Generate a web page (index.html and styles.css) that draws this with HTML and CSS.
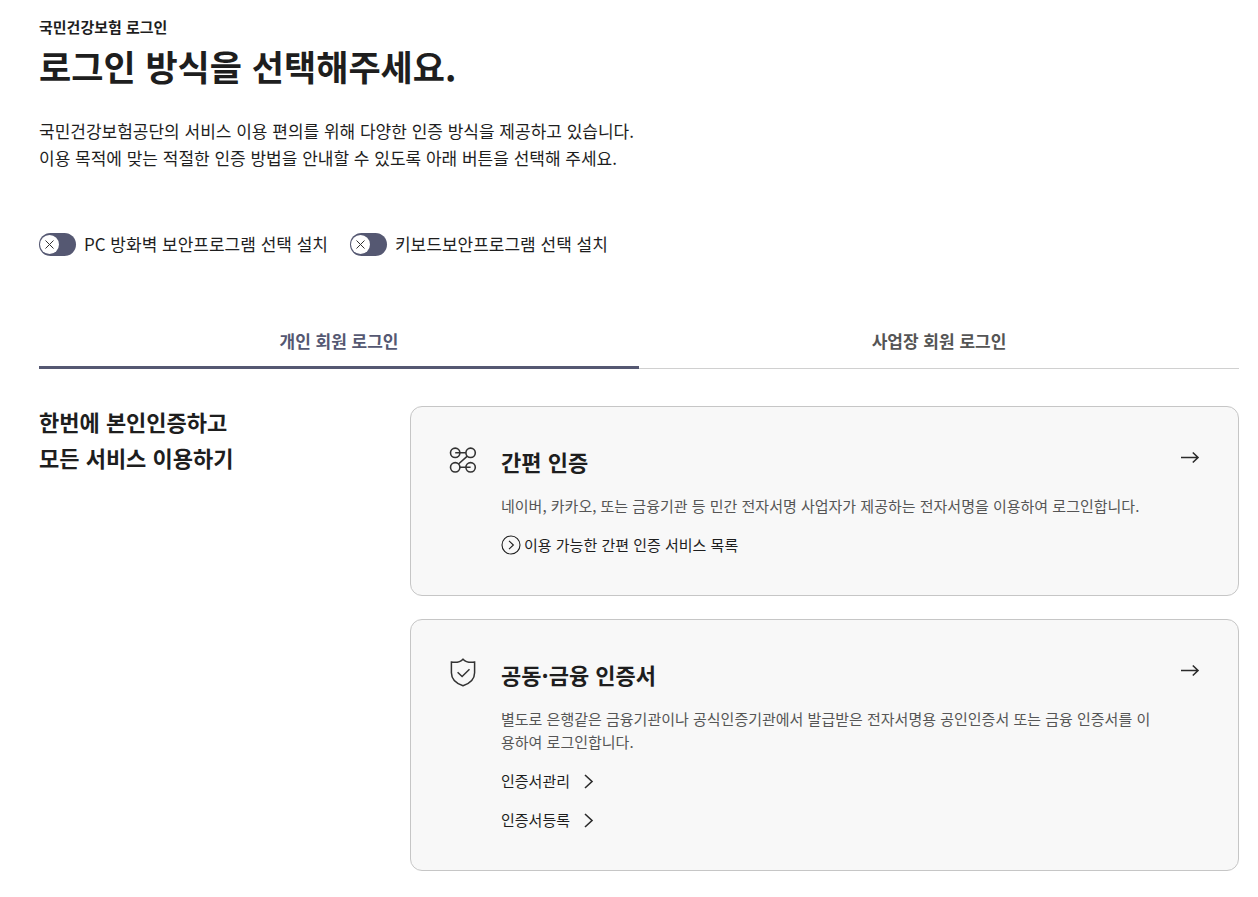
FILE: index.html
```html
<!DOCTYPE html>
<html lang="ko">
<head>
<meta charset="utf-8">
<meta name="viewport" content="width=device-width, initial-scale=1">
<title>국민건강보험 로그인</title>
<link rel="stylesheet" href="styles.css">
</head>
<body>
<main class="page">
  <header class="intro">
    <p class="intro-label">국민건강보험 로그인</p>
    <h1 class="intro-title">로그인 방식을 선택해주세요.</h1>
    <p class="intro-text">국민건강보험공단의 서비스 이용 편의를 위해 다양한 인증 방식을 제공하고 있습니다.<br>이용 목적에 맞는 적절한 인증 방법을 안내할 수 있도록 아래 버튼을 선택해 주세요.</p>
  </header>

  <div class="switches">
    <label class="switch" for="firewall">
      <span class="switch-control">
        <input class="switch-input" type="checkbox" id="firewall">
        <svg class="switch-knob" viewBox="0 0 19 19" aria-hidden="true"><circle cx="9.5" cy="9.5" r="9.5" fill="#fff"/><path d="M5.5 5.5l8 8M13.5 5.5l-8 8" stroke="#333" fill="none"/></svg>
      </span>
      <span>PC 방화벽 보안프로그램 선택 설치</span>
    </label>
    <label class="switch" for="keyboard">
      <span class="switch-control">
        <input class="switch-input" type="checkbox" id="keyboard">
        <svg class="switch-knob" viewBox="0 0 19 19" aria-hidden="true"><circle cx="9.5" cy="9.5" r="9.5" fill="#fff"/><path d="M5.5 5.5l8 8M13.5 5.5l-8 8" stroke="#333" fill="none"/></svg>
      </span>
      <span>키보드보안프로그램 선택 설치</span>
    </label>
  </div>

  <div class="tabs" role="tablist">
    <button class="tab tab-active" type="button" role="tab" aria-selected="true">개인 회원 로그인</button>
    <button class="tab" type="button" role="tab" aria-selected="false">사업장 회원 로그인</button>
  </div>

  <section class="methods">
    <h2 class="methods-title">한번에 본인인증하고<br>모든 서비스 이용하기</h2>
    <div class="cards">
      <article class="card">
        <svg class="card-icon" viewBox="0 0 28 30" aria-hidden="true" fill="none" stroke="#333" stroke-width="1.6">
          <circle cx="6.2" cy="7.8" r="4.7"/><circle cx="21.6" cy="7.8" r="4.7"/><circle cx="6.2" cy="22.3" r="4.7"/><circle cx="21.6" cy="22.3" r="4.7"/>
          <path d="M6.2 7.8h10.7M18.3 11.1L9.5 19M10.9 22.3h10.7"/>
        </svg>
        <div class="card-body">
          <h3 class="card-title">간편 인증</h3>
          <p class="card-text">네이버, 카카오, 또는 금융기관 등 민간 전자서명 사업자가 제공하는 전자서명을 이용하여 로그인합니다.</p>
          <a class="list-link" href="#">
            <svg class="list-icon" viewBox="0 0 20 20" aria-hidden="true" fill="none" stroke="#1e1e1e" stroke-width="1.1"><circle cx="10" cy="10" r="9"/><path d="M8 5.8l4.4 4.2L8 14.2"/></svg>
            <span>이용 가능한 간편 인증 서비스 목록</span>
          </a>
        </div>
        <a class="card-go" href="#" aria-label="간편 인증">
          <svg class="arrow" viewBox="0 0 20 24" aria-hidden="true" fill="none" stroke="#2b2b2b" stroke-width="1.6"><path d="M1 12.5h17M12.8 7.5l5.2 5-5.2 5"/></svg>
        </a>
      </article>

      <article class="card">
        <svg class="card-icon" viewBox="0 0 28 30" aria-hidden="true" fill="none" stroke="#333" stroke-width="1.5">
          <path d="M14 1.2C11.700 3.700 7.500 4.800 2.400 4.100V14.800C2.400 20.900 6.900 25.400 14 27.800C21.100 25.400 25.600 20.900 25.600 14.800V4.100C20.500 4.800 16.300 3.700 14 1.200z"/>
          <path d="M8.600 14.200l4.500 4.300 7.400-7.300"/>
        </svg>
        <div class="card-body">
          <h3 class="card-title">공동·금융 인증서</h3>
          <p class="card-text">별도로 은행같은 금융기관이나 공식인증기관에서 발급받은 전자서명용 공인인증서 또는 금융 인증서를 이용하여 로그인합니다.</p>
          <a class="page-link" href="#">
            <span>인증서관리</span>
            <svg class="chevron" viewBox="0 0 10 16" aria-hidden="true" fill="none" stroke="#2b2b2b" stroke-width="1.6"><path d="M1 2l7 6.500L1 15"/></svg>
          </a>
          <a class="page-link" href="#">
            <span>인증서등록</span>
            <svg class="chevron" viewBox="0 0 10 16" aria-hidden="true" fill="none" stroke="#2b2b2b" stroke-width="1.6"><path d="M1 2l7 6.500L1 15"/></svg>
          </a>
        </div>
        <a class="card-go" href="#" aria-label="공동·금융 인증서">
          <svg class="arrow" viewBox="0 0 20 24" aria-hidden="true" fill="none" stroke="#2b2b2b" stroke-width="1.6"><path d="M1 12.5h17M12.8 7.5l5.2 5-5.2 5"/></svg>
        </a>
      </article>
    </div>
  </section>
</main>
</body>
</html>
```
FILE: styles.css
```css
* {
  box-sizing: border-box;
}

body {
  margin: 0;
  background: #fff;
  color: #1e1e1e;
  font-family: "Noto Sans CJK KR", "Noto Sans", sans-serif;
  font-size: 17px;
  line-height: 27px;
}

h1, h2, h3, p {
  margin: 0;
}

a {
  color: inherit;
  text-decoration: none;
}

svg {
  display: block;
}

.page {
  padding: 16px 19px 24px 39px;
}

.intro-label {
  font-size: 15px;
  font-weight: 700;
  line-height: 22px;
}

.intro-title {
  font-size: 35px;
  font-weight: 700;
  line-height: 56px;
}

.intro-text {
  margin-top: 23px;
}

.switches {
  display: flex;
  flex-wrap: wrap;
  gap: 22px;
  margin-top: 59px;
}

.switch {
  display: flex;
  align-items: center;
  gap: 8px;
  cursor: pointer;
}

.switch-control {
  display: grid;
  align-items: center;
  padding-top: 2px;
}

.switch-input {
  grid-area: 1 / 1;
  appearance: none;
  width: 37px;
  height: 23px;
  margin: 0;
  border-radius: 12px;
  background: #555872;
  cursor: pointer;
}

.switch-knob {
  grid-area: 1 / 1;
  width: 19px;
  height: 19px;
  margin-left: 1px;
  pointer-events: none;
}

.tabs {
  display: grid;
  grid-template-columns: 1fr 1fr;
  margin-top: 70px;
}

.tab {
  padding: 0 0 14px;
  border: 0;
  border-bottom: 1px solid #d0d0d0;
  background: none;
  color: #555;
  font: inherit;
  font-weight: 700;
  cursor: pointer;
}

.tab-active {
  padding-bottom: 12px;
  border-bottom: 3px solid #555872;
  color: #555872;
}

.methods {
  display: grid;
  grid-template-columns: 371fr 829fr;
  margin-top: 37px;
}

.methods-title {
  margin-top: -3px;
  font-size: 22px;
  font-weight: 700;
  line-height: 36px;
}

.cards {
  display: grid;
  gap: 23px;
}

.card {
  display: flex;
  align-items: flex-start;
  padding: 38px 38px 39px;
  border: 1px solid #c6c6c6;
  border-radius: 12px;
  background: #f8f8f8;
}

.card-icon {
  flex: none;
  width: 28px;
  height: 30px;
}

.card-body {
  display: flex;
  flex: 1;
  flex-direction: column;
  align-items: flex-start;
  gap: 16px;
  margin: 0 20px 0 24px;
  font-size: 15px;
  line-height: 23px;
}

.card-title {
  font-size: 22px;
  font-weight: 700;
  line-height: 33px;
}

.card-text {
  color: #555;
}

.list-link,
.page-link {
  display: flex;
  align-items: center;
  gap: 3px;
}

.page-link {
  gap: 14px;
}

.list-icon {
  width: 20px;
  height: 20px;
}

.chevron {
  width: 10px;
  height: 16px;
}

.arrow {
  width: 20px;
  height: 24px;
}
```
